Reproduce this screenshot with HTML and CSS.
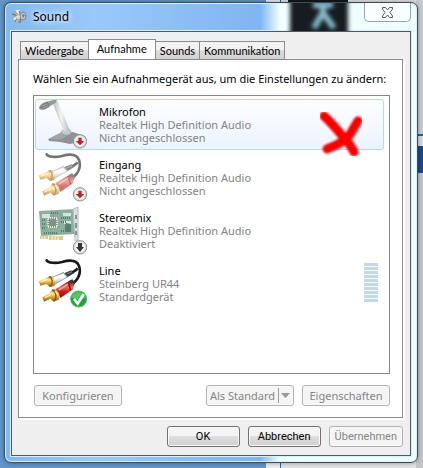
FILE: index.html
```html
<!DOCTYPE html>
<html lang="de">
<head>
<meta charset="utf-8">
<meta name="viewport" content="width=device-width, initial-scale=1">
<title>Sound</title>
<link rel="stylesheet" href="styles.css">
</head>
<body>
<div class="desktop-edge" aria-hidden="true"></div>
<div class="desktop-shape" aria-hidden="true"></div>
<main class="window">
  <header class="titlebar">
    <svg class="glass" viewBox="0 0 90 28" aria-hidden="true">
      <defs><filter id="soft" x="-30%" y="-30%" width="160%" height="160%"><feGaussianBlur stdDeviation="2"/></filter></defs>
      <rect x="13" y="-8" width="58" height="44" fill="#171e22" filter="url(#soft)"/>
      <g filter="url(#soft)" fill="none" stroke="#86bdce" stroke-width="6"><path d="M36 2h20M46 2v10M45 11L37 25M47 11l10 14"/></g>
    </svg>
    <svg class="app-icon" viewBox="0 0 16 16" aria-hidden="true">
      <path d="M4 1l5 0 3 5-1 7-4 2-4-3-2-6z" fill="#a7abad"/>
      <path d="M4 1l4 5 1-5zM2 9l6-2-3 6z" fill="#e8eced"/>
      <path d="M8 2l2 5-1 7M1 5l6 2-3 6" stroke="#676c6e" fill="none"/>
      <ellipse cx="12" cy="7" rx="3" ry="4" fill="#bfc5c8" stroke="#80878a"/>
      <path d="M11 5l3 1-2 3z" fill="#6e7477"/>
      <circle cx="7" cy="8" r="2" fill="#ddd"/>
    </svg>
    <h1>Sound</h1>
    <button class="close" type="button" aria-label="Schließen">
      <svg viewBox="0 0 13 11" aria-hidden="true"><path d="M1.500 .5h3l2 2.500 2-2.500h3v1.500L9 5.500l2.500 3.500v1.500h-3l-2-2.500-2 2.500h-3V9L4 5.500 1.500 2z" fill="#fff" stroke="#515b68"/></svg>
    </button>
  </header>
  <section class="client">
    <nav class="tabs" role="tablist">
      <button class="tab" type="button" role="tab">Wiedergabe</button>
      <button class="tab active" type="button" role="tab" aria-selected="true">Aufnahme</button>
      <button class="tab" type="button" role="tab">Sounds</button>
      <button class="tab" type="button" role="tab">Kommunikation</button>
    </nav>
    <section class="panel" role="tabpanel">
      <p class="hint">Wählen Sie ein Aufnahmegerät aus, um die Einstellungen zu ändern:</p>
      <ul class="devices">
        <li class="device selected">
          <svg class="picture" viewBox="3 9 150 150" aria-hidden="true">
            <defs>
              <linearGradient id="arm"><stop stop-color="#b9bbbd"/><stop offset=".5" stop-color="#f5f5f5"/><stop offset="1" stop-color="#b5b7b9"/></linearGradient>
              <linearGradient id="gold" x2="0" y2="1"><stop stop-color="#b87b1c"/><stop offset=".35" stop-color="#ffe68a"/><stop offset=".65" stop-color="#daa02c"/><stop offset="1" stop-color="#8a5710"/></linearGradient>
              <linearGradient id="silver" x2="0" y2="1"><stop stop-color="#9a9da0"/><stop offset=".4" stop-color="#fff"/><stop offset="1" stop-color="#a5a8ab"/></linearGradient>
              <linearGradient id="red" x2="0" y2="1"><stop stop-color="#8d1410"/><stop offset=".35" stop-color="#e8695e"/><stop offset=".6" stop-color="#cf1e16"/><stop offset="1" stop-color="#8d0e0b"/></linearGradient>
            </defs>
            <path d="M36 127l44-23 30 1 38 13v12l-46 11-30-6-32-3z" fill="#8f9194"/><path d="M36 127l44-23 30 1-34 22z" fill="#a3a5a8"/>
            <ellipse cx="91" cy="105" rx="14" ry="9" fill="#c6c8ca" stroke="#9da0a3" stroke-width="2"/>
            <path d="M50 17l15-6 36 88-8 5-12-4z" fill="url(#arm)"/><path d="M54 22l28 70" stroke="#c9cbcd" stroke-width="2"/>
            <path d="M9 35C10 23 22 15 38 13l18-5 7 2-4 7-16 10C35 35 18 43 9 35z" fill="#96999c"/><path d="M12 34c0-9 11-16 24-18l4 10c-9 10-21 14-28 8z" fill="#7e8184"/><path d="M17 28l15-7M20 34l16-8" stroke="#a8abae" stroke-width="3"/>
            <g id="badge"><circle cx="132" cy="133" r="20" fill="#dcdedf" stroke="#8e9194" stroke-width="3"/><circle cx="132" cy="133" r="15" fill="#f5f5f5"/></g><path d="M127 122h10v10h8l-13 13-13-13h8z" fill="#ce1b2c"/>
          </svg>
          <div class="details"><strong>Mikrofon</strong><span>Realtek High Definition Audio</span><span>Nicht angeschlossen</span></div>
        </li>
        <li class="device">
          <svg class="picture" viewBox="3 9 150 150" aria-hidden="true">
            <g opacity=".6"><g id="plugs">
              <path d="M32 13c4 8 26 10 46 5 24-7 44-7 51 12 7 20-1 43-25 56" fill="none" stroke="#17191b" stroke-width="8" stroke-linecap="round"/>
              <path d="M88 57c14-5 28-9 37-20" fill="none" stroke="#17191b" stroke-width="8"/>
              <path d="M84 52l22-9 8 9-24 14z" fill="#3b3d40"/><path d="M92 54l16-7" stroke="#85888b" stroke-width="3"/>
              <path d="M46 65l37-16 11 14-38 22z" fill="url(#silver)" stroke="#85888b" stroke-width="2"/><path d="M54 70l30-14" stroke="#fff" stroke-width="7"/>
              <path d="M8 75l25-9 7-6c13-2 21 20 15 30l-14 3-9-9-19 5z" fill="url(#gold)"/><path d="M40 61c9 5 12 20 4 30" fill="none" stroke="#8d5c16" stroke-width="4"/><path d="M14 78l20-7" stroke="#fff1a8" stroke-width="4"/>
              <path d="M96 76l13-6 9 11-8 13z" fill="#34363a"/>
              <path d="M59 99l36-22 19 5-3 18-38 26z" fill="url(#red)"/><path d="M68 102l29-18" stroke="#f4a098" stroke-width="5"/><path d="M97 80l7 23" stroke="#7c120e" stroke-width="4"/>
              <path d="M19 124l22-12 8-12c17-3 26 19 19 31l-16 6-8-9-20 9z" fill="url(#gold)"/><path d="M49 101c12 5 15 22 5 34" fill="none" stroke="#8d5c16" stroke-width="5"/><path d="M26 125l18-8M58 105l6 11" stroke="#fff1a8" stroke-width="4"/>
            </g></g>
            <use href="#badge"/><path d="M127 122h10v10h8l-13 13-13-13h8z" fill="#ce1b2c"/>
          </svg>
          <div class="details"><strong>Eingang</strong><span>Realtek High Definition Audio</span><span>Nicht angeschlossen</span></div>
        </li>
        <li class="device">
          <svg class="picture" viewBox="0 0 50 50" aria-hidden="true">
            <path d="M2 5l36-2v25L4 30z" fill="#8bae9f"/>
            <path d="M5 8h8v4H5zM26 7h8v3h-8zM27 15h7v3h-7z" fill="#d4e4dc"/><path d="M5 14h4M5 18h4M5 22h4M24 12h10M24 16h5M24 25h10M14 7h8M7 27h13" stroke="#557f6d" stroke-dasharray="1 1" stroke-width="2"/>
            <path d="M11 12h9v9h-9z" fill="#83918b" stroke="#dce9e2" stroke-dasharray="1 1" stroke-width="2"/>
            <path d="M28 20l1-3 5 1v8h-6z" fill="#5b7f70"/>
            <path d="M3 30h8v3H3zM12 30h14v4H12z" fill="#dfca8b"/><path d="M5 30v3M8 30v3M15 30v4M18 30v4M21 30v4" stroke="#fff6d8"/>
            <path d="M36 3l5-2v33l-3 1z" fill="#dbdde0" stroke="#b9bcbf"/><path d="M39 9v4M39 17v5M39 25v4" stroke="#8a9095" stroke-width="2"/>
            <use href="#badge" transform="translate(-1 -3) scale(.3333)"/><path d="M41 37h4v4h2l-4 5-4-5h2z" fill="#333639"/>
          </svg>
          <div class="details"><strong>Stereomix</strong><span>Realtek High Definition Audio</span><span>Deaktiviert</span></div>
        </li>
        <li class="device">
          <svg class="picture" viewBox="3 9 150 150" aria-hidden="true">
            <use href="#plugs"/>
            <circle cx="128" cy="129" r="24" fill="#1fa33e" stroke="#5fae6b" stroke-width="3"/><path d="M106 124a23 23 0 0 1 44 0c-10 9-30 10-44 0" fill="#4fc566"/><path d="M114 129l11 14 18-28" fill="none" stroke="#fff" stroke-width="8"/>
          </svg>
          <div class="details"><strong>Line</strong><span>Steinberg UR44</span><span>Standardgerät</span></div>
          <div class="meter" role="img" aria-label="Pegel"><i></i><i></i><i></i><i></i><i></i><i></i><i></i><i></i><i></i><i></i></div>
        </li>
      </ul>
      <div class="actions">
        <button class="button muted configure" type="button" disabled>Konfigurieren</button>
        <button class="button muted split" type="button" disabled><span>Als Standard</span><svg viewBox="0 0 14 15" aria-hidden="true"><path d="M.5 0v15" stroke="#999"/><path d="M3 5h9l-4.500 5z" fill="#999"/></svg></button>
        <button class="button muted" type="button" disabled>Eigenschaften</button>
      </div>
      <svg class="mark" viewBox="0 0 48 52" aria-hidden="true"><defs><filter id="markblur"><feGaussianBlur stdDeviation=".8"/></filter></defs><g filter="url(#markblur)"><path d="M8 9C16 16 24 26 29 32c6 6 7 9 9 13M42 14C37 21 34 30 29 33 23 37 19 39 11 42" fill="none" stroke="#f80000" stroke-width="9" stroke-linecap="round"/></g></svg>
    </section>
    <footer class="footer">
      <button class="button" type="button">OK</button>
      <button class="button" type="button">Abbrechen</button>
      <button class="button muted" type="button" disabled>Übernehmen</button>
    </footer>
  </section>
</main>
</body>
</html>
```
FILE: styles.css
```css
* { box-sizing: border-box; }
body {
  margin: 0;
  min-height: 100vh;
  padding: 2px 5px 5px 4px;
  font: 11px/13px "Noto Sans", "Open Sans", sans-serif;
  color: #000;
  background: linear-gradient(90deg, #6295ca 0 266px, #e9eef4 266px 280px, #2d66a7 280px 281px, #dfe1e3 281px);
}
.desktop-edge {
  position: absolute;
  top: 0;
  right: 0;
  width: 7px;
  height: 100vh;
  background: linear-gradient(#c9ccce 0 134px, #315f99 134px 136px, #d8dce0 136px 146px, #174b8a 146px 173px, #c3c5c7 173px);
}
.desktop-shape { position: absolute; top: 0; right: 75px; width: 60px; height: 4px; background: #10181c; }
.window {
  position: relative;
  padding: 0 6px 6px;
  border: 1px solid #3d4d5b;
  border-radius: 7px;
  background: linear-gradient(90deg, #83b9ef 0, #9bc8f8 90px, #7eb5f3 255px, #f0ffff 275px, #effcfd);
  box-shadow: inset 0 0 0 1px #d7f0ff, 0 0 4px #0006;
}
.titlebar {
  position: relative;
  display: flex;
  align-items: center;
  height: 28px;
  gap: 6px;
}
h1 { margin: 0; font: 12px/20px "Noto Sans", "Open Sans", sans-serif; text-shadow: 0 0 8px #fff, 0 0 5px #fff; }
.app-icon { width: 16px; height: 16px; z-index: 1; }
.glass { position: absolute; right: 44px; top: 0; width: 90px; height: 28px; overflow: hidden; }
.close {
  position: relative;
  align-self: flex-start;
  width: 47px;
  height: 19px;
  margin-left: auto;
  padding: 0;
  border: 1px solid #99a4aa;
  border-top: 0;
  border-radius: 0 0 5px 5px;
  background: #f8ffff;
}
.close svg { display: block; width: 13px; height: 11px; margin: 0 auto; }
.client {
  padding: 7px 7px 8px 6px;
  border: 1px solid #4e5964;
  background: #efefef;
  box-shadow: 0 0 0 1px #d5efff;
}
.tabs { display: flex; align-items: flex-end; padding-left: 2px; }
.tab {
  height: 18px;
  margin: 0 0 0 -1px;
  padding: 0 4px;
  border: 1px solid #898c95;
  border-bottom: 0;
  background: linear-gradient(#f2f2f2 50%, #dedede 50%, #d0d0d0);
  font: 11px/16px Lato, "Open Sans", sans-serif;
  white-space: nowrap;
}
.tab:first-child { margin-left: 0; }
.tab.active { position: relative; height: 21px; margin-bottom: -1px; padding: 0 8px 2px; background: #fff; }
.panel { position: relative; padding: 11px 12px 11px 14px; border: 1px solid #898c95; background: #fff; box-shadow: 2px 2px #fff; }
.hint { margin: 0 0 8px; line-height: 16px; white-space: nowrap; }
.devices { min-height: 279px; margin: 0; padding: 3px 5px 3px 1px; border: 1px solid #828790; list-style: none; }
.device {
  display: flex;
  align-items: flex-start;
  height: 51px;
  margin-bottom: 2px;
  padding: 0 0 0 1px;
  border: 1px solid transparent;
  border-radius: 3px;
}
.device.selected { border-color: #b8d6fb; background: linear-gradient(#fdfeff, #ebf3fd); }
.picture { flex: none; width: 50px; height: 50px; }
.details { display: flex; flex-direction: column; padding: 5px 0 0 12px; color: #838383; white-space: nowrap; }
.details strong { color: #000; font-weight: 400; }
.meter { display: grid; gap: 1px; width: 14px; margin: 4px 5px 0 auto; }
.meter i { height: 3px; background: #c0dce2; }
.actions { display: flex; gap: 8px; margin: 11px 0 0 1px; }
.button {
  height: 21px;
  min-width: 73px;
  padding: 0 5px;
  border: 1px solid #707070;
  border-radius: 3px;
  background: linear-gradient(#f4f4f4 50%, #dedede 50%, #d0d0d0);
  box-shadow: inset 0 0 0 1px #fafafa;
  color: #000;
  font: 11px/17px "Noto Sans", "Open Sans", sans-serif;
  white-space: nowrap;
}
.actions .button { width: 88px; }
.button.muted { border-color: #adb2b5; background: #f4f4f4; color: #858585; }
.actions .configure { margin-right: auto; }
.actions .split { display: flex; align-items: center; justify-content: space-between; padding: 0 1px 0 3px; }
.split svg { width: 14px; height: 15px; }
.footer { display: flex; justify-content: flex-end; gap: 8px; padding-top: 8px; }
.footer .button { font: 11px/17px Roboto, "Open Sans", sans-serif; }
.mark { position: absolute; top: 47px; right: 38px; width: 48px; height: 52px; }
```
